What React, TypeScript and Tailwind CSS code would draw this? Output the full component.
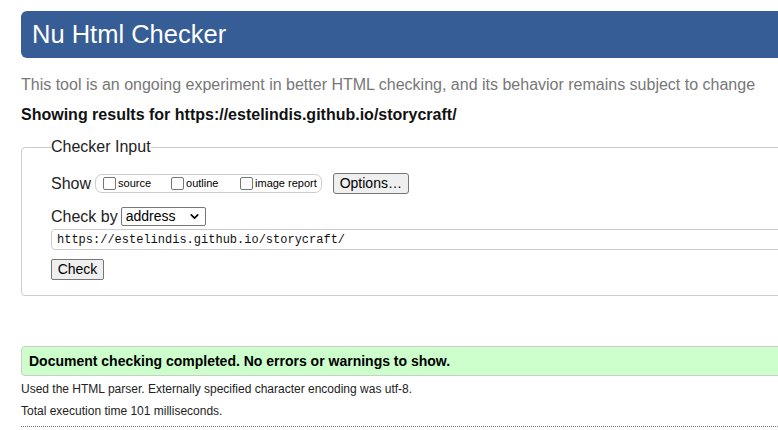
import { ChevronDown } from "lucide-react";

function Checkbox({ label }: { label: string }) {
  return (
    <label className="flex items-center">
      <span className="inline-block h-[13px] w-[13px] rounded-[2px] border border-[#767676] bg-white" />
      <span className="ml-[2px] text-[11px] text-black">{label}</span>
    </label>
  );
}

export default function App() {
  return (
    <div
      className="h-[430px] w-[778px] overflow-hidden bg-white text-black"
      style={{ fontFamily: '"Liberation Sans", Arial, sans-serif' }}
    >
      <div className="w-[840px] pl-[21px] pt-[11px]">
        <h1 className="flex h-[47px] items-center rounded-[6px] bg-[#365d95] pl-[11px] text-[25.5px] text-white">
          Nu Html Checker
        </h1>

        <p className="mt-[17px] text-[16px] leading-[20px] text-[#777777]">
          This tool is an ongoing experiment in better HTML checking, and its behavior remains subject to change
        </p>
        <p className="mt-[10px] text-[16px] font-bold leading-[19px] text-[#111]">
          Showing results for https://estelindis.github.io/storycraft/
        </p>

        <fieldset className="relative mt-[14px] h-[158px] rounded-[4px] border border-[#cccccc] pl-[29px] pr-0">
          <legend className="px-0 text-[16px] leading-[18px] text-[#222]">Checker Input</legend>

          <div className="mt-[17px] flex h-[21px] items-center">
            <span className="text-[16px] text-[#222]">Show</span>
            <div className="ml-[4px] flex h-[19px] items-center rounded-[7px] border border-[#cccccc] pl-[7px] pr-[4px]">
              <div className="w-[68px]">
                <Checkbox label="source" />
              </div>
              <div className="w-[69px]">
                <Checkbox label="outline" />
              </div>
              <Checkbox label="image report" />
            </div>
            <button className="ml-[11px] h-[21px] w-[76px] rounded-[3px] border border-[#767676] bg-[#efefef] text-[14px] leading-[19px] text-black">
              Options…
            </button>
          </div>

          <div className="mt-[13px] flex h-[19px] items-center">
            <span className="text-[16px] text-[#222]">Check by</span>
            <div className="ml-[3px] flex h-[19px] w-[85px] items-center justify-between rounded-[2px] border border-[#767676] bg-white pl-[4px] pr-[4px] text-[14px] leading-[17px]">
              <span>address</span>
              <ChevronDown className="h-[13px] w-[13px]" strokeWidth={3} />
            </div>
          </div>

          <div
            className="mt-[3px] flex h-[21px] items-center rounded-[4px] border border-[#cccccc] pl-[5px] text-[12px] text-[#111]"
            style={{ fontFamily: '"Liberation Mono", "DejaVu Sans Mono", monospace' }}
          >
            https://estelindis.github.io/storycraft/
          </div>

          <button className="mt-[9px] block h-[21px] w-[53px] rounded-[2px] border border-[#767676] bg-[#efefef] text-[14px] leading-[19px] text-black">
            Check
          </button>
        </fieldset>

        <div className="mt-[50px] flex h-[30px] items-center rounded-l-[4px] border border-[#cccccc] bg-[#ccffcc] pl-[7px] text-[14px] font-bold text-black">
          Document checking completed. No errors or warnings to show.
        </div>

        <p className="mt-[6px] text-[12px] leading-[15px] text-[#222]">
          Used the HTML parser. Externally specified character encoding was utf-8.
        </p>
        <p className="mt-[7px] text-[12px] leading-[15px] text-[#222]">Total execution time 101 milliseconds.</p>
        <div className="mt-[7px] border-t border-dotted border-[#777]" />
      </div>
    </div>
  );
}
